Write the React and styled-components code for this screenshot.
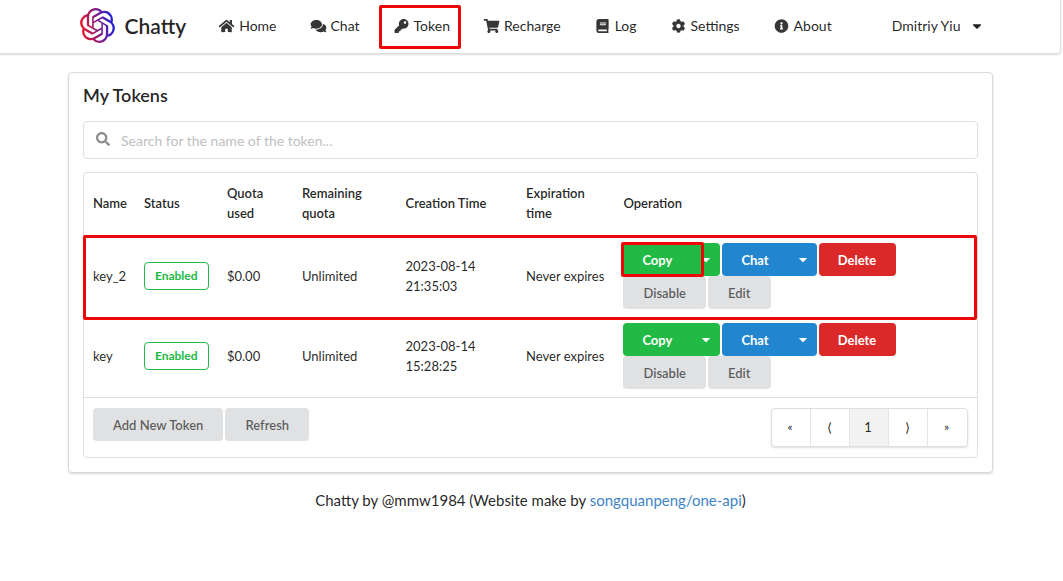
import React from "react";
import styled, { createGlobalStyle, css } from "styled-components";
import {
  FaBook,
  FaCaretDown,
  FaCog,
  FaComments,
  FaHome,
  FaInfoCircle,
  FaKey,
  FaSearch,
  FaShoppingCart,
} from "react-icons/fa";
import { SiOpenai } from "react-icons/si";

const GlobalStyle = createGlobalStyle`
  * {
    box-sizing: border-box;
  }
  body {
    margin: 0;
    background-color: #fff;
    color: rgba(0, 0, 0, 0.87);
    font-family: Lato, "Liberation Sans", sans-serif;
    font-size: 14px;
    line-height: 20px;
  }
  button,
  input {
    font-family: inherit;
  }
`;

const highlight = css`
  content: "";
  position: absolute;
  border: 3px solid #ee0606;
  border-radius: 2px;
  pointer-events: none;
  z-index: 2;
`;

const Page = styled.div`
  padding-right: 2px;
`;

const Container = styled.div`
  width: calc(100% - 32px);
  max-width: 925px;
  margin: 0 auto;
`;

const Navbar = styled.header`
  border: 1px solid rgba(34, 36, 38, 0.15);
  border-width: 0 1px 1px 0;
  border-radius: 0 0 4px 0;
  box-shadow: 0 1px 2px 0 rgba(34, 36, 38, 0.15);
`;

const NavInner = styled(Container)`
  display: flex;
  align-items: center;
  height: 53px;
  padding-bottom: 2px;
`;

const Brand = styled.a`
  display: flex;
  align-items: center;
  gap: 10px;
  padding: 0 16px 0 12px;
  color: rgba(0, 0, 0, 0.87);
  font-size: 21px;
  font-weight: 600;
  text-decoration: none;
  svg {
    width: 35px;
    height: 35px;
  }
`;

const NavLinks = styled.nav`
  display: flex;
  align-items: center;
  gap: 1px;
`;

const NavLink = styled.a`
  display: flex;
  align-items: center;
  gap: 4px;
  height: 44px;
  padding: 0 16px;
  color: rgba(0, 0, 0, 0.87);
  text-decoration: none;
  svg {
    width: 17px;
    height: 14px;
    opacity: 0.9;
  }
  ${(props) =>
    props.$outlined &&
    css`
      position: relative;
      &::after {
        ${highlight}
        inset: 1px 5px -1px 2px;
      }
    `}
`;

const UserMenu = styled.button`
  display: flex;
  align-items: center;
  gap: 11px;
  margin-left: auto;
  padding: 0 11px;
  border: 0;
  background: none;
  color: rgba(0, 0, 0, 0.87);
  font-size: 14px;
  svg {
    width: 10px;
    height: 14px;
  }
`;

const Card = styled.main`
  margin-top: 18px;
  padding: 12px 14px 14px;
  border: 1px solid #d9dadb;
  border-radius: 4px;
  box-shadow: 0 1px 2px 0 #d4d4d5;
`;

const Title = styled.h1`
  margin: 0 0 16px;
  font-size: 18px;
  font-weight: 600;
  line-height: 20px;
`;

const SearchBox = styled.label`
  display: flex;
  align-items: center;
  gap: 11px;
  height: 38px;
  margin-bottom: 13px;
  padding: 0 12px;
  border: 1px solid #dededf;
  border-radius: 4px;
  svg {
    flex: none;
    width: 14px;
    height: 14px;
    margin-bottom: 2px;
    color: #8c8c8c;
  }
  input {
    flex: 1;
    min-width: 0;
    padding: 0;
    border: 0;
    outline: 0;
    color: inherit;
    font-size: 14px;
  }
  input::placeholder {
    color: #bfbfbf;
    opacity: 1;
  }
`;

const TableFrame = styled.div`
  border: 1px solid #dededf;
  border-radius: 4px;
`;

const Table = styled.table`
  width: 100%;
  border-collapse: separate;
  border-spacing: 0;
  table-layout: fixed;
  font-size: 13px;
`;

const HeadCell = styled.th`
  width: ${(props) => props.$width};
  padding: 10px 9px 14px;
  font-weight: 600;
  text-align: left;
`;

const Cell = styled.td`
  padding: 6px 9px 8px;
`;

const Row = styled.tr`
  ${(props) =>
    props.$outlined &&
    css`
      position: relative;
      ${Cell}:first-child::after {
        ${highlight}
        inset: -2px 0 -3px -1px;
      }
    `}
`;

const StatusLabel = styled.span`
  display: inline-block;
  padding: 3px 10px;
  border: 1px solid #21ba45;
  border-radius: 4px;
  color: #21ba45;
  font-size: 12px;
  font-weight: 700;
`;

const Actions = styled.div`
  display: flex;
  flex-wrap: wrap;
  column-gap: 2px;
`;

const tones = {
  green: ["#21ba45", "#fff"],
  blue: ["#2185d0", "#fff"],
  red: ["#db2828", "#fff"],
  grey: ["#e0e1e2", "rgba(0, 0, 0, 0.6)"],
};

const Button = styled.button`
  height: 33px;
  padding: ${(props) => (props.$tone === "grey" ? "0 20px" : "0 20px 0 19px")};
  border: 0;
  border-radius: 4px;
  background-color: ${(props) => tones[props.$tone][0]};
  color: ${(props) => tones[props.$tone][1]};
  font-size: 13px;
  font-weight: ${(props) => (props.$tone === "grey" ? 600 : 700)};
  white-space: nowrap;
`;

const SplitButton = styled.div`
  display: flex;
  ${Button}:first-child {
    border-radius: 4px 0 0 4px;
  }
  ${Button}:last-child {
    width: 28px;
    padding: 0 9px;
    border-radius: 0 4px 4px 0;
  }
  svg {
    display: block;
    width: 10px;
    height: 13px;
  }
  ${(props) =>
    props.$outlined &&
    css`
      position: relative;
      &::after {
        ${highlight}
        inset: -1px 16px -1px -2px;
      }
    `}
`;

const TableFooter = styled.div`
  display: flex;
  align-items: flex-start;
  justify-content: space-between;
  padding: 10px 9px;
  border-top: 1px solid #dededf;
`;

const FooterButtons = styled.div`
  display: flex;
  gap: 2px;
`;

const Pagination = styled.nav`
  display: flex;
  border: 1px solid #dededf;
  border-radius: 4px;
  box-shadow: 0 1px 2px 0 rgba(34, 36, 38, 0.15);
`;

const PageButton = styled.button`
  width: 39px;
  height: 37px;
  padding: 0 2px 2px 0;
  border: 0;
  border-right: 1px solid #e4e4e5;
  background-color: ${(props) => (props.$active ? "#f2f2f2" : "transparent")};
  color: rgba(0, 0, 0, 0.87);
  font-size: ${(props) => (props.$small ? "12px" : "13px")};
  &:last-child {
    border-right: 0;
  }
`;

const Footer = styled.footer`
  margin-top: 17px;
  font-size: 15px;
  text-align: center;
  a {
    color: #4183c4;
    text-decoration: none;
  }
`;

const links = [
  { name: "Home", icon: FaHome },
  { name: "Chat", icon: FaComments },
  { name: "Token", icon: FaKey, outlined: true },
  { name: "Recharge", icon: FaShoppingCart },
  { name: "Log", icon: FaBook },
  { name: "Settings", icon: FaCog },
  { name: "About", icon: FaInfoCircle },
];

const columns = [
  { name: "Name", width: "5.7%" },
  { name: "Status", width: "9.3%" },
  { name: "Quota used", width: "8.4%" },
  { name: "Remaining quota", width: "11.6%" },
  { name: "Creation Time", width: "13.5%" },
  { name: "Expiration time", width: "10.9%" },
  { name: "Operation" },
];

const tokens = [
  { name: "key_2", created: "2023-08-14 21:35:03", outlined: true },
  { name: "key", created: "2023-08-14 15:28:25" },
];

const pages = [
  { text: "«", label: "First page", small: true },
  { text: "⟨", label: "Previous page" },
  { text: "1", label: "Page 1", active: true },
  { text: "⟩", label: "Next page" },
  { text: "»", label: "Last page", small: true },
];

const Logo = () => (
  <>
    <svg style={{ position: "absolute", width: 0, height: 0 }} aria-hidden="true">
      <defs>
        <linearGradient id="logo-gradient" x1="0" y1="0.6" x2="1" y2="0.4">
          <stop offset="0" stopColor="#f01822" />
          <stop offset="1" stopColor="#1b22e0" />
        </linearGradient>
      </defs>
    </svg>
    <SiOpenai style={{ fill: "url(#logo-gradient)" }} />
  </>
);

const TokenRow = ({ token }) => (
  <Row $outlined={token.outlined}>
    <Cell>{token.name}</Cell>
    <Cell>
      <StatusLabel>Enabled</StatusLabel>
    </Cell>
    <Cell>$0.00</Cell>
    <Cell>Unlimited</Cell>
    <Cell>{token.created}</Cell>
    <Cell>Never expires</Cell>
    <Cell>
      <Actions>
        <SplitButton $outlined={token.outlined}>
          <Button $tone="green">Copy</Button>
          <Button $tone="green" aria-label="Copy options">
            <FaCaretDown />
          </Button>
        </SplitButton>
        <SplitButton>
          <Button $tone="blue">Chat</Button>
          <Button $tone="blue" aria-label="Chat options">
            <FaCaretDown />
          </Button>
        </SplitButton>
        <Button $tone="red">Delete</Button>
        <Button $tone="grey">Disable</Button>
        <Button $tone="grey">Edit</Button>
      </Actions>
    </Cell>
  </Row>
);

const App = () => {
  return (
    <Page>
      <GlobalStyle />
      <Navbar>
        <NavInner>
          <Brand href="#">
            <Logo />
            Chatty
          </Brand>
          <NavLinks>
            {links.map(({ name, icon: Icon, outlined }) => (
              <NavLink key={name} href="#" $outlined={outlined}>
                <Icon />
                {name}
              </NavLink>
            ))}
          </NavLinks>
          <UserMenu>
            Dmitriy Yiu
            <FaCaretDown />
          </UserMenu>
        </NavInner>
      </Navbar>
      <Container>
        <Card>
          <Title>My Tokens</Title>
          <SearchBox>
            <FaSearch />
            <input
              type="text"
              aria-label="Search tokens"
              placeholder="Search for the name of the token..."
            />
          </SearchBox>
          <TableFrame>
            <Table>
              <thead>
                <tr>
                  {columns.map((column) => (
                    <HeadCell key={column.name} $width={column.width}>
                      {column.name}
                    </HeadCell>
                  ))}
                </tr>
              </thead>
              <tbody>
                {tokens.map((token) => (
                  <TokenRow key={token.name} token={token} />
                ))}
              </tbody>
            </Table>
            <TableFooter>
              <FooterButtons>
                <Button $tone="grey">Add New Token</Button>
                <Button $tone="grey">Refresh</Button>
              </FooterButtons>
              <Pagination aria-label="Pages">
                {pages.map((page) => (
                  <PageButton
                    key={page.label}
                    aria-label={page.label}
                    $active={page.active}
                    $small={page.small}
                  >
                    {page.text}
                  </PageButton>
                ))}
              </Pagination>
            </TableFooter>
          </TableFrame>
        </Card>
        <Footer>
          Chatty by @mmw1984 (Website make by{" "}
          <a href="#">songquanpeng/one-api</a>)
        </Footer>
      </Container>
    </Page>
  );
};

export default App;
